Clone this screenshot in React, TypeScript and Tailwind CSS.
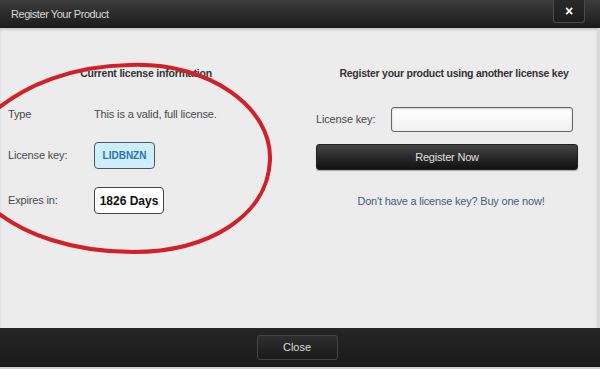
import React from 'react';

const font = { fontFamily: '"Liberation Sans", Arial, sans-serif' };

const Row = ({ label, children, className = '' }: { label: string; children: React.ReactNode; className?: string }) => (
  <div className={`flex h-[27px] items-center ${className}`}>
    <div className="w-[86px] text-[11px] tracking-[-0.15px] text-[#4a4a4a]">{label}</div>
    <div className="flex items-center">{children}</div>
  </div>
);

const App = () => {
  return (
    <div className="relative flex h-[369px] w-[600px] flex-col overflow-hidden bg-[#1d1d1d]" style={font}>
      {/* Title bar */}
      <div className="relative flex h-[28px] items-center bg-gradient-to-b from-[#3d3d3d] to-[#1b1b1b] pl-[11px]">
        <span className="text-[11px] tracking-[-0.45px] text-[#d8d8d8]">Register Your Product</span>
        <button className="absolute right-[15px] top-0 flex h-[23px] w-[32px] items-center justify-center rounded-b-[3px] border border-t-0 border-[#4a4a4a] bg-gradient-to-b from-[#2a2a2a] to-[#1e1e1e] text-[14px] font-bold leading-none text-white">
          ×
        </button>
      </div>

      {/* Content */}
      <div className="flex flex-1 border-r-[3px] border-[#d9d9d9] bg-[#ececec] shadow-[inset_0_2px_2px_rgba(0,0,0,0.15)]">
        {/* Left: current license */}
        <div className="w-[300px] shrink-0 pl-[8px] pt-[39px]">
          <div className="h-[13px] w-[276px] text-center text-[10.5px] font-bold leading-[13px] tracking-[-0.2px] text-[#333]">
            Current license information
          </div>
          <Row label="Type" className="mt-[21px]">
            <span className="text-[11px] tracking-[-0.15px] text-[#4a4a4a]">This is a valid, full license.</span>
          </Row>
          <Row label="License key:" className="mt-[14px]">
            <span className="flex h-[27px] w-[61px] items-center justify-center rounded-[4px] border border-[#555] bg-[#cdeefc] text-[10px] font-bold text-[#2f72b8]">
              LIDBNZN
            </span>
          </Row>
          <Row label="Expires in:" className="mt-[18px]">
            <span className="flex h-[27px] w-[70px] items-center justify-center rounded-[4px] border border-[#444] bg-white text-[12px] font-bold text-[#111]">
              1826 Days
            </span>
          </Row>
        </div>

        {/* Right: register another key */}
        <div className="w-[278px] shrink-0 pl-[16px] pt-[39px]">
          <div className="h-[13px] pl-[14px] text-center text-[10.5px] font-bold leading-[13px] tracking-[-0.25px] text-[#333]">
            Register your product using another license key
          </div>
          <div className="mt-[27px] flex h-[25px] items-center pl-[-2px]">
            <span className="w-[75px] shrink-0 text-[11px] tracking-[-0.15px] text-[#4a4a4a]">License key:</span>
            <input className="h-[25px] w-[182px] shrink-0 rounded-[3px] border border-[#666] bg-gradient-to-b from-white to-[#f1f1f1] shadow-[inset_0_1px_2px_rgba(0,0,0,0.2)] outline-none" />
          </div>
          <button className="mt-[12px] flex h-[26px] w-[262px] items-center justify-center rounded-[3px] border border-[#222] bg-gradient-to-b from-[#444] to-[#121212] text-[11px] tracking-[-0.2px] text-[#e0e0e0] shadow-[0_1px_1px_rgba(0,0,0,0.3)]">
            Register Now
          </button>
          <div className="mt-[23px] pl-[8px] text-center text-[11px] tracking-[-0.2px] text-[#4b5b82]">
            Don't have a license key? Buy one now!
          </div>
        </div>
      </div>

      {/* Footer */}
      <div className="flex h-[39px] items-center justify-center bg-gradient-to-b from-[#252525] to-[#1a1a1a]">
        <button className="mr-[6px] flex h-[25px] w-[81px] items-center justify-center rounded-[3px] border border-[#444] bg-gradient-to-b from-[#2e2e2e] to-[#1a1a1a] text-[11px] text-[#dcdcdc]">
          Close
        </button>
      </div>
      <div className="h-[2px] bg-[#cfcfcf]" />

      {/* Red annotation ellipse */}
      <svg className="pointer-events-none absolute left-0 top-0" width="600" height="369" viewBox="0 0 600 369">
        <path
          d="M 130 65 C 210 62, 272 108, 270 160 C 268 216, 208 252, 133 252 C 72 252, 22 234, -8 208 C -30 185, -30 132, -4 110 C 25 86, 70 66, 130 65 Z"
          fill="none"
          stroke="#d21f28"
          strokeWidth="4"
        />
      </svg>
    </div>
  );
};

export default App;
